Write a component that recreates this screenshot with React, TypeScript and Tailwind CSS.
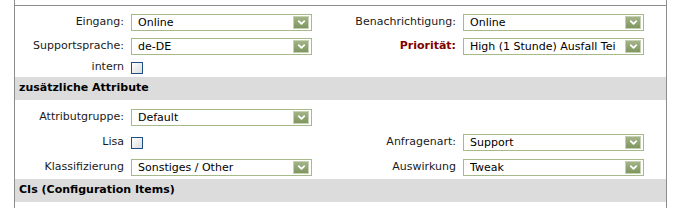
import { ChevronDown } from 'lucide-react';

function Select({ value }: { value: string }) {
  return (
    <div className="w-[181px] h-[17px] border border-[#a6b98a] bg-white flex items-center pl-[6px] pr-[2px]">
      <span className="flex-1 overflow-hidden whitespace-nowrap leading-none text-black">{value}</span>
      <span className="w-[16px] h-[13px] shrink-0 ml-[3px] bg-gradient-to-b from-[#a3b488] to-[#7f965f] border border-[#c6d2b2] flex items-center justify-center">
        <ChevronDown size={11} strokeWidth={4} className="text-white" />
      </span>
    </div>
  );
}

function Checkbox() {
  return <div className="w-[12px] h-[12px] border border-[#1d4f86] bg-gradient-to-br from-white to-[#dcdcdc]" />;
}

function Row({ label, children, right, h = 'h-[24px]' }: { label: React.ReactNode; children: React.ReactNode; right?: [React.ReactNode, string]; h?: string }) {
  return (
    <div className={`flex items-center ${h}`}>
      <div className="w-[116px] text-right pr-[7px] shrink-0 whitespace-nowrap">{label}</div>
      {children}
      {right && (
        <>
          <div className="w-[151px] text-right pr-[7px] shrink-0 whitespace-nowrap">{right[0]}</div>
          <Select value={right[1]} />
        </>
      )}
    </div>
  );
}

export default function App() {
  return (
    <div className="w-[683px] h-[208px] bg-white overflow-hidden text-[11px] text-[#1a1a1a]" style={{ fontFamily: '"DejaVu Sans", Verdana, sans-serif' }}>
      <div className="ml-[14px] w-[653px] h-full border-l border-r border-[#8d8d8d]">
        <div className="h-[5px]" />
        <div className="border-t border-[#8d8d8d] pt-[4px]">
          <Row label="Eingang:" right={['Benachrichtigung:', 'Online']}>
            <Select value="Online" />
          </Row>
          <Row label="Supportsprache:" right={[<span className="font-bold text-[#7f0000]">Priorität:</span>, 'High (1 Stunde) Ausfall Tei']}>
            <Select value="de-DE" />
          </Row>
          <Row label="intern" h="h-[19px]">
            <Checkbox />
          </Row>
        </div>
        <div className="h-[23px] bg-[#dcdcdc] flex items-center pl-[4px] font-bold text-black">zusätzliche Attribute</div>
        <div className="pt-[5px]">
          <Row label="Attributgruppe:" h="h-[25px]">
            <Select value="Default" />
          </Row>
          <Row label="Lisa" h="h-[25px]" right={['Anfragenart:', 'Support']}>
            <div className="flex items-center w-[181px]"><Checkbox /></div>
          </Row>
          <Row label="Klassifizierung" h="h-[24px]" right={['Auswirkung', 'Tweak']}>
            <Select value="Sonstiges / Other" />
          </Row>
        </div>
        <div className="h-[23px] bg-[#dcdcdc] flex items-center pl-[4px] font-bold text-black">CIs (Configuration Items)</div>
      </div>
    </div>
  );
}
